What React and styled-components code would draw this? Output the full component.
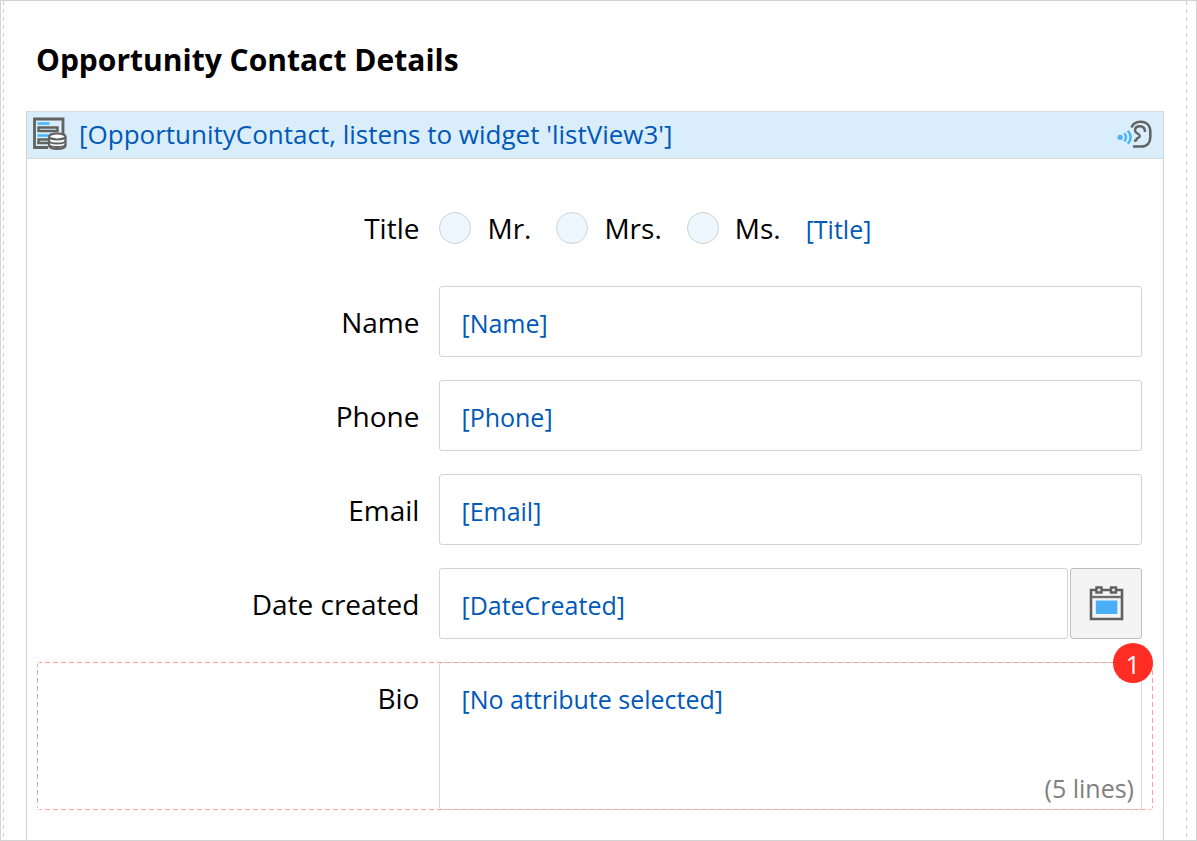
import React from "react";
import styled, { createGlobalStyle } from "styled-components";

const GlobalStyle = createGlobalStyle`
  *, *::before, *::after { box-sizing: border-box; }
  body {
    margin: 0;
    background: #fff;
    color: #000;
    font-family: "Segoe UI", "Open Sans", "Noto Sans", sans-serif;
  }
  input, textarea, button { font-family: inherit; }
`;

const dashedLine = (direction, color, dash) =>
  `repeating-linear-gradient(${direction}, ${color} 0 ${dash}px, transparent ${dash}px 8px)`;

const Page = styled.main`
  display: flex;
  flex-direction: column;
  min-height: 100vh;
  padding: 0 9px 0 2px;
  border: 1px solid #d3d3d3;
`;

const LayoutCell = styled.section`
  flex: 1;
  display: flex;
  flex-direction: column;
  padding: 35px 23px 0;
  background-image: ${dashedLine("to bottom", "#cdcdcd", 4)}, ${dashedLine("to bottom", "#cdcdcd", 4)};
  background-size: 1px 100%;
  background-position: left top, right top;
  background-repeat: no-repeat;
`;

const Heading = styled.h1`
  margin: 0;
  padding: 0 10px 27px;
  font-size: 30px;
  line-height: 48px;
  font-weight: 700;
`;

const DataView = styled.div`
  flex: 1;
  display: flex;
  flex-direction: column;
  border: solid #d3d3d3;
  border-width: 0 1px;
`;

const DataViewHeader = styled.header`
  display: flex;
  align-items: center;
  gap: 11px;
  height: 48px;
  padding: 0 11px 1px 6px;
  border: solid #d8dadc;
  border-width: 1px 0;
  background: #daedfb;
  color: #0059b8;
  font-size: 26px;
  line-height: 40px;
`;

const SourceName = styled.span`
  flex: 1;
  padding-bottom: 2px;
  white-space: nowrap;
`;

const Form = styled.form`
  display: flex;
  flex-direction: column;
  gap: 23px;
  padding: 33px 10px 30px;
`;

const Row = styled.div`
  position: relative;
  display: grid;
  grid-template-columns: 4fr 7fr;
  padding: 0 11px 0 1px;
`;

const SelectedRow = styled(Row)`
  border-radius: 4px;

  &::after {
    content: "";
    position: absolute;
    inset: 0;
    pointer-events: none;
    border-radius: 4px;
    background:
      ${dashedLine("to right", "#ff9c96", 5)} top / 100% 1px no-repeat,
      ${dashedLine("to right", "#ffa8a2", 5)} bottom / 100% 1px no-repeat,
      ${dashedLine("to bottom", "#ff9c96", 5)} left / 1px 100% no-repeat,
      ${dashedLine("to bottom", "#ff9c96", 5)} right / 1px 100% no-repeat;
  }
`;

const Label = styled.label`
  padding: 2px 20px 0 0;
  text-align: right;
  font-size: 28px;
  line-height: 69px;
`;

const RowCaption = styled(Label).attrs({ as: "span" })``;

const Options = styled.div`
  display: flex;
  align-items: center;
  gap: 25px;
`;

const Option = styled.label`
  display: flex;
  align-items: center;
  gap: 16px;
  font-size: 28px;
`;

const OptionText = styled.span`
  padding-top: 2px;
  line-height: 69px;
`;

const Radio = styled.input.attrs({ type: "radio" })`
  appearance: none;
  width: 32px;
  height: 32px;
  margin: 0;
  border: 1px solid #ced3d8;
  border-radius: 50%;
  background: #eef6fe;
`;

const Attribute = styled.span`
  padding-top: 2px;
  color: #0059b8;
  font-size: 25px;
`;

const Field = styled.div`
  position: relative;
  display: flex;
  gap: 2px;
`;

const TextBox = styled.input.attrs({ type: "text" })`
  flex: 1;
  min-width: 0;
  height: 71px;
  padding: 2px 21px 0;
  border: 1px solid #d3d3d7;
  border-radius: 3px;
  background: #fff;
  color: #0059b8;
  font-size: 25px;
  outline: none;
`;

const TextArea = styled.textarea`
  flex: 1;
  min-width: 0;
  height: 148px;
  padding: 19px 21px;
  border: 1px solid #d8d8da;
  border-radius: 3px;
  background: #fff;
  color: #0059b8;
  font-size: 25px;
  line-height: 34px;
  resize: none;
  overflow: hidden;
  outline: none;
`;

const LineCount = styled.span`
  position: absolute;
  right: 8px;
  bottom: 5px;
  color: #808080;
  font-size: 25px;
  line-height: 34px;
`;

const DateButton = styled.button`
  display: flex;
  align-items: center;
  justify-content: center;
  width: 72px;
  height: 71px;
  padding: 0;
  border: 1px solid #bdbdbd;
  border-radius: 3px;
  background: #f4f4f4;
`;

const Badge = styled.span`
  position: absolute;
  z-index: 1;
  top: -19px;
  right: 0;
  width: 40px;
  height: 40px;
  border-radius: 50%;
  background: #ff2d23;
  color: #fff;
  text-align: center;
  font-size: 25px;
  line-height: 42px;
`;

const FormDataIcon = () => (
  <svg width="35" height="35" viewBox="0 0 35 35" fill="none" aria-hidden="true">
    <path d="M15 30.500H1.500V2H30v15" stroke="#606360" strokeWidth="2.800" />
    <path d="M4.500 6.500h12M4.500 18.500h11" stroke="#4ab3fb" strokeWidth="2.400" />
    <path d="M5.500 10.500h19v3.500h-19zM16 22.500H5.500V26H16" stroke="#606360" strokeWidth="2.400" />
    <path d="M16 19.500v9c0 4.500 16.500 4.500 16.500 0v-9" fill="#fff" stroke="#606360" strokeWidth="2.200" />
    <ellipse cx="24.250" cy="19.500" rx="8.250" ry="3" fill="#fff" stroke="#606360" strokeWidth="2.200" />
    <path d="M16 23.500c0 4 16.500 4 16.500 0M16 27c0 4 16.500 4 16.500 0" stroke="#606360" strokeWidth="1.800" />
  </svg>
);

const ListenIcon = () => (
  <svg width="35" height="30" viewBox="0 0 35 30" fill="none" aria-hidden="true">
    <circle cx="3.200" cy="17.300" r="2.600" fill="#4ab3fb" />
    <path d="M7.200 13.300q3.600 4 0 8M10.900 10.800q5.600 6.500 0 13" stroke="#4ab3fb" strokeWidth="2.400" />
    <path d="M14.500 7.500C16 3.500 19.500 1.800 23.500 1.800C29.500 1.800 33.300 5.700 33.300 11.500V17C33.300 22.500 30.200 26.500 24.500 26.500H16" stroke="#606360" strokeWidth="2.600" />
    <path d="M28 12C28 8.500 26.200 6.300 23 6.300C20 6.300 18 8 18 10.500C18 13.800 22.800 13.200 22.800 16C22.800 18.500 19.500 17.300 19.500 19.500Q19.500 20.800 17 20.800" stroke="#606360" strokeWidth="2.400" />
  </svg>
);

const CalendarIcon = () => (
  <svg width="35" height="35" viewBox="0 0 35 35" fill="none" aria-hidden="true">
    <path d="M7 4H2V33h31V4h-6M13 4h8" stroke="#606060" strokeWidth="2.600" />
    <path d="M2 11h31" stroke="#6c6c6a" strokeWidth="2.400" />
    <path d="M7.500 1.500h5v5h-5zM22 1.500h5v5h-5z" stroke="#606060" strokeWidth="2.400" />
    <path d="M6.800 14.500h21.500v13.500H6.800z" fill="#48aff8" />
  </svg>
);

const textFields = [
  { id: "name", label: "Name", value: "[Name]" },
  { id: "phone", label: "Phone", value: "[Phone]" },
  { id: "email", label: "Email", value: "[Email]" },
  { id: "date", label: "Date created", value: "[DateCreated]", picker: true },
];

export default function App() {
  return (
    <>
      <GlobalStyle />
      <Page>
        <LayoutCell>
          <Heading>Opportunity Contact Details</Heading>
          <DataView>
            <DataViewHeader>
              <FormDataIcon />
              <SourceName>[OpportunityContact, listens to widget 'listView3']</SourceName>
              <ListenIcon />
            </DataViewHeader>
            <Form>
              <Row role="radiogroup" aria-labelledby="title-caption">
                <RowCaption id="title-caption">Title</RowCaption>
                <Options>
                  {["Mr.", "Mrs.", "Ms."].map((title) => (
                    <Option key={title}>
                      <Radio name="title" value={title} />
                      <OptionText>{title}</OptionText>
                    </Option>
                  ))}
                  <Attribute>[Title]</Attribute>
                </Options>
              </Row>
              {textFields.map(({ id, label, value, picker }) => (
                <Row key={id}>
                  <Label htmlFor={id}>{label}</Label>
                  <Field>
                    <TextBox id={id} defaultValue={value} />
                    {picker && (
                      <DateButton type="button" aria-label="Choose date">
                        <CalendarIcon />
                      </DateButton>
                    )}
                  </Field>
                </Row>
              ))}
              <SelectedRow>
                <Label htmlFor="bio">Bio</Label>
                <Field>
                  <TextArea id="bio" defaultValue="[No attribute selected]" />
                  <LineCount>(5 lines)</LineCount>
                </Field>
                <Badge>1</Badge>
              </SelectedRow>
            </Form>
          </DataView>
        </LayoutCell>
      </Page>
    </>
  );
}
